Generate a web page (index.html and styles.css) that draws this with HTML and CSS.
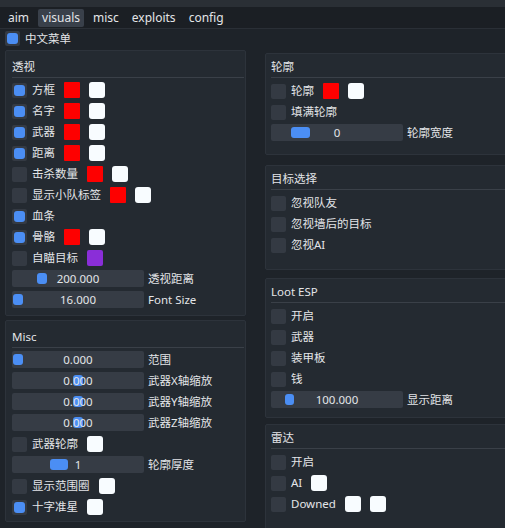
FILE: index.html
```html
<!DOCTYPE html>
<html>
<head>
<meta charset="utf-8">
<link rel="stylesheet" href="styles.css">
</head>
<body>
<div class="topstrip"></div>
<div class="menubar">
  <span class="tab">aim</span>
  <span class="tab active">visuals</span>
  <span class="tab">misc</span>
  <span class="tab">exploits</span>
  <span class="tab">config</span>
</div>
<div class="langrow">
  <span class="cb on"><i></i></span><span class="lbl">中文菜单</span>
</div>
<div class="columns">
  <div class="col col-left">
    <section class="panel pl p-esp">
      <div class="ptitle">透视</div>
      <div class="sep"></div>
      <div class="rows">
        <div class="row"><span class="cb on"><i></i></span><span class="lbl">方框</span><span class="sw red"></span><span class="sw white"></span></div>
        <div class="row"><span class="cb on"><i></i></span><span class="lbl">名字</span><span class="sw red"></span><span class="sw white"></span></div>
        <div class="row"><span class="cb on"><i></i></span><span class="lbl">武器</span><span class="sw red"></span><span class="sw white"></span></div>
        <div class="row"><span class="cb on"><i></i></span><span class="lbl">距离</span><span class="sw red"></span><span class="sw white"></span></div>
        <div class="row"><span class="cb"></span><span class="lbl">击杀数量</span><span class="sw red"></span><span class="sw white"></span></div>
        <div class="row"><span class="cb"></span><span class="lbl">显示小队标签</span><span class="sw red"></span><span class="sw white"></span></div>
        <div class="row"><span class="cb on"><i></i></span><span class="lbl">血条</span></div>
        <div class="row"><span class="cb on"><i></i></span><span class="lbl">骨骼</span><span class="sw red"></span><span class="sw white"></span></div>
        <div class="row"><span class="cb"></span><span class="lbl">自瞄目标</span><span class="sw purple"></span></div>
        <div class="row srow"><div class="slider"><span class="grab" style="left:25px;width:10px"></span><span class="val">200.000</span></div><span class="slbl">透视距离</span></div>
        <div class="row srow"><div class="slider"><span class="grab" style="left:1px;width:10px"></span><span class="val">16.000</span></div><span class="slbl">Font Size</span></div>
      </div>
    </section>
    <section class="panel pl p-misc">
      <div class="ptitle">Misc</div>
      <div class="sep"></div>
      <div class="rows">
        <div class="row srow"><div class="slider"><span class="grab" style="left:1px;width:10px"></span><span class="val">0.000</span></div><span class="slbl">范围</span></div>
        <div class="row srow"><div class="slider"><span class="grab" style="left:61px;width:10px"></span><span class="val">0.000</span></div><span class="slbl">武器X轴缩放</span></div>
        <div class="row srow"><div class="slider"><span class="grab" style="left:61px;width:10px"></span><span class="val">0.000</span></div><span class="slbl">武器Y轴缩放</span></div>
        <div class="row srow"><div class="slider"><span class="grab" style="left:61px;width:10px"></span><span class="val">0.000</span></div><span class="slbl">武器Z轴缩放</span></div>
        <div class="row"><span class="cb"></span><span class="lbl">武器轮廓</span><span class="sw white"></span></div>
        <div class="row srow"><div class="slider"><span class="grab" style="left:38px;width:18px"></span><span class="val">1</span></div><span class="slbl">轮廓厚度</span></div>
        <div class="row"><span class="cb"></span><span class="lbl">显示范围圈</span><span class="sw white"></span></div>
        <div class="row"><span class="cb on"><i></i></span><span class="lbl">十字准星</span><span class="sw white"></span></div>
      </div>
    </section>
  </div>
  <div class="col col-right">
    <section class="panel pr p-outline">
      <div class="ptitle">轮廓</div>
      <div class="sep"></div>
      <div class="rows">
        <div class="row"><span class="cb"></span><span class="lbl">轮廓</span><span class="sw red"></span><span class="sw white"></span></div>
        <div class="row"><span class="cb"></span><span class="lbl">填满轮廓</span></div>
        <div class="row srow"><div class="slider"><span class="grab" style="left:20px;width:19px"></span><span class="val">0</span></div><span class="slbl">轮廓宽度</span></div>
      </div>
    </section>
    <section class="panel pr p-target">
      <div class="ptitle">目标选择</div>
      <div class="sep"></div>
      <div class="rows">
        <div class="row"><span class="cb"></span><span class="lbl">忽视队友</span></div>
        <div class="row"><span class="cb"></span><span class="lbl">忽视墙后的目标</span></div>
        <div class="row"><span class="cb"></span><span class="lbl">忽视AI</span></div>
      </div>
    </section>
    <section class="panel pr p-loot">
      <div class="ptitle">Loot ESP</div>
      <div class="sep"></div>
      <div class="rows">
        <div class="row"><span class="cb"></span><span class="lbl">开启</span></div>
        <div class="row"><span class="cb"></span><span class="lbl">武器</span></div>
        <div class="row"><span class="cb"></span><span class="lbl">装甲板</span></div>
        <div class="row"><span class="cb"></span><span class="lbl">钱</span></div>
        <div class="row srow"><div class="slider"><span class="grab" style="left:14px;width:9px"></span><span class="val">100.000</span></div><span class="slbl">显示距离</span></div>
      </div>
    </section>
    <section class="panel pr p-radar">
      <div class="ptitle">雷达</div>
      <div class="sep"></div>
      <div class="rows">
        <div class="row"><span class="cb"></span><span class="lbl">开启</span></div>
        <div class="row"><span class="cb"></span><span class="lbl">AI</span><span class="sw white"></span></div>
        <div class="row"><span class="cb"></span><span class="lbl">Downed</span><span class="sw white"></span><span class="sw white"></span></div>
      </div>
    </section>
  </div>
</div>
</body>
</html>
```
FILE: styles.css
```css
* { box-sizing: border-box; margin: 0; padding: 0; }
html, body { width: 505px; height: 528px; overflow: hidden; }
body {
  background: #1e2329;
  font-family: "Noto Sans", "Noto Sans CJK SC", sans-serif;
  font-size: 11.5px;
  color: #e3e5e8;
}
.topstrip { height: 7px; background: #2a2f35; }
.menubar {
  height: 22px;
  display: flex;
  align-items: center;
  gap: 5px;
  padding-left: 4px;
  background: #1b1f24;
  border-bottom: 1px solid #2a2f36;
}
.tab {
  font-size: 12px;
  padding: 0 4px;
  height: 18px;
  line-height: 18px;
  border-radius: 2px;
}
.tab.active { background: #39404a; }
.langrow {
  display: flex;
  align-items: center;
  height: 15px;
  margin: 2px 0 0 5px;
}
.columns {
  display: flex;
  gap: 19px;
  margin-top: 4px;
  padding-left: 5px;
}
.col { display: flex; flex-direction: column; flex: none; }
.col-left { width: 241px; }
.col-right { width: 250px; margin-top: 3px; }
.panel {
  background: #242a31;
  border: 1px solid #2d333b;
  border-radius: 2px;
  flex: none;
  overflow: hidden;
}
.pl { padding: 7px 6px 0 6px; }
.pr { padding: 4px 5px 0 5px; }
.p-esp { height: 266px; }
.p-misc { height: 202px; margin-top: 4px; }
.p-outline { height: 102px; }
.p-target { height: 105px; margin-top: 10px; }
.p-loot { height: 140px; margin-top: 8px; }
.p-radar { height: 120px; margin-top: 6px; }
.ptitle { height: 18px; line-height: 18px; font-size: 11.5px; }
.sep {
  height: 1px;
  background: #3a4048;
  margin: 1px -5px 4px 0;
}
.pr .sep { margin-bottom: 5px; margin-right: -20px; }
.rows { display: flex; flex-direction: column; gap: 5px; }
.row {
  display: flex;
  align-items: center;
  height: 16px;
  white-space: nowrap;
}
.cb {
  width: 15px;
  height: 15px;
  background: #343a43;
  border-radius: 2px;
  flex: none;
  padding: 2px;
  display: block;
}
.cb i {
  display: block;
  width: 11px;
  height: 11px;
  border-radius: 3px;
  background: #4b8ef4;
}
.lbl { margin-left: 5px; line-height: 16px; }
.sw {
  width: 16px;
  height: 16px;
  border-radius: 3px;
  margin-left: 9px;
  flex: none;
}
.sw.red { background: #fe0000; border-radius: 1px; }
.sw.white { background: #f8fcff; }
.sw.purple { background: #8a2ed8; border-radius: 2px; }
.srow { height: 17px; margin-top: -1px; }
.slider {
  position: relative;
  width: 132px;
  height: 17px;
  background: #363c45;
  border-radius: 2px;
  flex: none;
  text-align: center;
  line-height: 17px;
}
.grab {
  position: absolute;
  top: 3px;
  height: 11px;
  border-radius: 3px;
  background: #4b8ef4;
}
.val { position: relative; }
.slbl { margin-left: 4px; line-height: 16px; }
```
